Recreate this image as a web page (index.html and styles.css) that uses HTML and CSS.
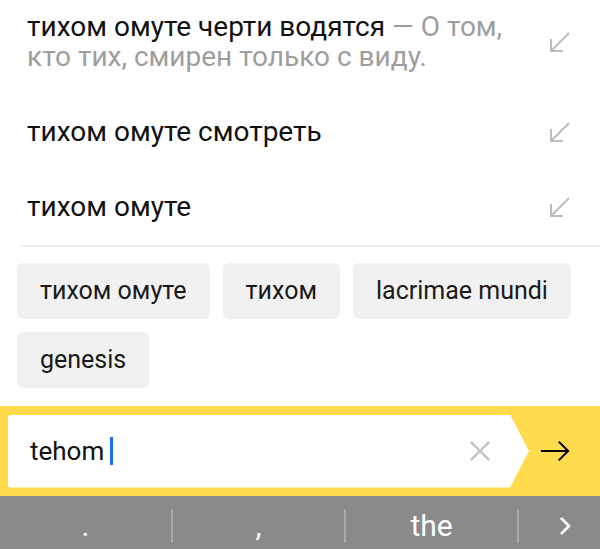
FILE: index.html
```html
<!DOCTYPE html>
<html lang="ru">
<head>
    <meta charset="UTF-8">
    <meta name="viewport" content="width=device-width, initial-scale=1.0">
    <link rel="stylesheet" href="styles.css">
</head>
<body>
    <div class="screen">
        <ul class="suggest-list">
            <li class="suggest-row">
                <span class="suggest-text">тихом омуте черти водятся <span class="suggest-fact">— О том, кто тих, смирен только с виду.</span></span>
                <svg class="insert-icon" viewBox="0 0 20 20"><path d="M19 1 L1 19 M1 7 V19 H13"/></svg>
            </li>
            <li class="suggest-row">
                <span class="suggest-text">тихом омуте смотреть</span>
                <svg class="insert-icon" viewBox="0 0 20 20"><path d="M19 1 L1 19 M1 7 V19 H13"/></svg>
            </li>
            <li class="suggest-row">
                <span class="suggest-text">тихом омуте</span>
                <svg class="insert-icon" viewBox="0 0 20 20"><path d="M19 1 L1 19 M1 7 V19 H13"/></svg>
            </li>
        </ul>

        <div class="chips">
            <span class="chip">тихом омуте</span>
            <span class="chip">тихом</span>
            <span class="chip">lacrimae mundi</span>
            <span class="chip">genesis</span>
        </div>

        <div class="search-bar">
            <div class="search-input">
                <span class="query">tehom</span><span class="cursor"></span>
                <svg class="clear-icon" viewBox="0 0 24 24"><path d="M2 2 L22 22 M22 2 L2 22"/></svg>
            </div>
            <div class="go-button">
                <svg class="go-icon" viewBox="0 0 32 24"><path d="M1 12 H30 M20 2 L30 12 L20 22"/></svg>
            </div>
        </div>

        <div class="kb-strip">
            <div class="kb-cell">.</div>
            <div class="kb-cell">,</div>
            <div class="kb-cell">the</div>
            <div class="kb-cell kb-more">
                <svg class="more-icon" viewBox="0 0 12 20"><path d="M2 2 L10 10 L2 18"/></svg>
            </div>
        </div>
    </div>
</body>
</html>
```

FILE: styles.css
```css
body {
    margin: 0;
    padding: 0;
    background-color: #fff;
    font-family: Roboto, "Noto Sans", sans-serif;
}
.screen {
    width: 600px;
    height: 549px;
    overflow: hidden;
    display: flex;
    flex-direction: column;
}

/* suggestion rows */
.suggest-list {
    list-style: none;
    margin: -10px 0 0 0;
    padding: 0 0 0 20px;
}
.suggest-row {
    display: flex;
    align-items: center;
    padding: 22px 30px 23px 7px;
    font-size: 28px;
    line-height: 30px;
    color: #111;
}
.suggest-row:last-child {
    border-bottom: 2px solid #ececec;
}
.suggest-text {
    flex: 1;
    padding-right: 15px;
}
.suggest-fact {
    color: #9e9e9e;
}
.insert-icon {
    width: 20px;
    height: 20px;
    flex-shrink: 0;
    fill: none;
    stroke: #bdbdbd;
    stroke-width: 2;
}

/* quick chips */
.chips {
    display: flex;
    flex-wrap: wrap;
    gap: 13px;
    padding: 16px 17px 0 17px;
}
.chip {
    background-color: #f1f1f1;
    border-radius: 6px;
    height: 56px;
    line-height: 56px;
    padding: 0 23px;
    font-size: 25px;
    color: #1a1a1a;
}

/* search bar */
.search-bar {
    margin-top: auto;
    height: 90px;
    background-color: #ffdb4d;
    display: flex;
    align-items: center;
    padding-left: 8px;
    box-sizing: border-box;
}
.search-input {
    width: 521px;
    height: 73px;
    background-color: #fff;
    border-radius: 3px 0 0 3px;
    clip-path: polygon(0 0, calc(100% - 19px) 0, 100% 50%, calc(100% - 19px) 100%, 0 100%);
    display: flex;
    align-items: center;
    padding: 0 38px 0 22px;
    box-sizing: border-box;
    font-size: 26px;
    color: #111;
}
.cursor {
    width: 3px;
    height: 28px;
    margin-left: 6px;
    background-color: #1a73e8;
}
.clear-icon {
    width: 22px;
    height: 22px;
    margin-left: auto;
    fill: none;
    stroke: #c4c4c4;
    stroke-width: 2.6;
}
.go-button {
    flex: 1;
    display: flex;
    justify-content: center;
    align-items: center;
    padding-right: 20px;
}
.go-icon {
    width: 30px;
    height: 24px;
    fill: none;
    stroke: #000;
    stroke-width: 2.2;
}

/* keyboard suggestion strip */
.kb-strip {
    height: 53px;
    background-color: #8a8a8a;
    display: flex;
    align-items: center;
    color: #fff;
    font-size: 30px;
}
.kb-cell {
    width: 173px;
    height: 34px;
    line-height: 34px;
    text-align: center;
    border-right: 2px solid #a9a9a9;
    box-sizing: border-box;
    margin-top: 6px;
}
.kb-more {
    flex: 1;
    border-right: none;
    display: flex;
    justify-content: center;
    align-items: center;
    padding-left: 10px;
}
.more-icon {
    width: 12px;
    height: 20px;
    fill: none;
    stroke: #fff;
    stroke-width: 2.6;
}
```
